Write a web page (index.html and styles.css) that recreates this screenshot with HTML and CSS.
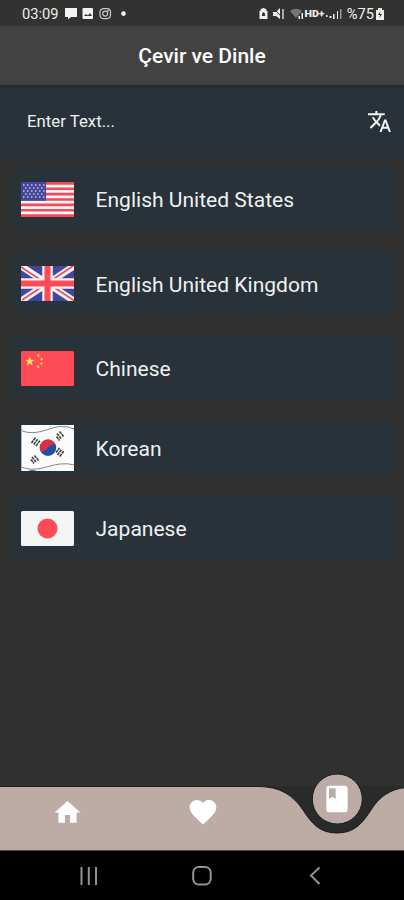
FILE: index.html
```html
<!DOCTYPE html>
<html lang="tr">
<head>
<meta charset="utf-8">
<title>Çevir ve Dinle</title>
<link rel="stylesheet" href="styles.css">
</head>
<body>
<div class="status">
  <span class="clock">03:09</span>
  <svg class="notices" width="66" height="14" viewBox="0 0 66 14" fill="#f2f2f2">
    <path d="M1 1h12v9H7l-3 2.600V10H1z"/>
    <rect x="18.500" y="1" width="10.500" height="11" rx="1"/><path d="M20 9l2-2 2 1.500 2-2.500 2 3z" fill="#333"/>
    <g fill="none" stroke="#c8c8c8" stroke-width="1.200"><rect x="36" y="1.600" width="10.500" height="10" rx="3.500"/><circle cx="41.200" cy="6.600" r="2.500"/></g><circle cx="44" cy="3.800" r=".8"/>
    <circle cx="59.500" cy="6.600" r="2.300"/>
  </svg>
  <svg class="signals" width="86" height="14" viewBox="0 0 86 14" fill="#eee">
    <path d="M1.500 4h1V2.500Q5.500-.5 8.500 2.500V4h1v8h-8z"/><path d="M4 9V6.500L5.500 5 7 6.500V9z" fill="#333"/>
    <path d="M15 5h3l4-4v11l-4-3h-3z"/><path d="M15.500 1l10 11" stroke="#333" stroke-width="1"/><path d="M25 2v10" stroke="#ccc" stroke-width="1.500"/>
    <path d="M32 4Q38-.5 44 4l-6 7z" fill="#777"/><path d="M40.500 9H42v3h-1.500zM43.500 6H45v6h-1.500z"/>
    <text x="46.500" y="9.500" class="hd" textLength="20" lengthAdjust="spacingAndGlyphs">HD+</text>
    <path d="M68 8h1.500v2H68zM71.500 9h2v2h-2zM75 7h1.500v5H75zM79 4h1v8h-1z"/><path d="M82 2h1.500v10H82z" fill="#999"/>
  </svg>
  <span class="percent">%75</span>
  <svg class="battery" width="10" height="12" viewBox="0 0 10 12"><path d="M3 0h4v2h2v10H1V2h2z" fill="#eee"/><path d="M5.500 3L3 7h2l-.5 3L7 6H5z" fill="#333"/></svg>
</div>
<header class="appbar">Çevir ve Dinle</header>
<div class="entry">
  <span>Enter Text...</span>
  <svg width="25" height="25" viewBox="0 0 24 24" fill="#f4f7f8"><path d="M12.870 15.070l-2.540-2.510.03-.03A17.520 17.520 0 0 0 14.070 6H17V4h-7V2H8v2H1v1.990h11.170C11.500 7.920 10.440 9.750 9 11.350 8.070 10.320 7.300 9.190 6.690 8h-2c.73 1.630 1.730 3.170 2.980 4.560l-5.090 5.020L4 19l5-5 3.110 3.110.76-2.040zM18.500 10h-2L12 22h2l1.120-3h4.750L21 22h2l-4.500-12zm-2.620 7l1.620-4.330L19.120 17h-3.240z"/></svg>
</div>
<main class="list">
  <div class="card">
    <svg class="flag" viewBox="0 0 53 35">
      <rect width="53" height="35" rx="1.500" fill="#f5f5f5"/>
      <path d="M0 1.350h53M0 6.730h53M0 12.120h53M0 17.500h53M0 22.880h53M0 28.270h53M0 33.650h53" stroke="#f04a5b" stroke-width="2.690"/>
      <path d="M0 0h25v18.800H0z" fill="#46479b"/>
      <path d="M2 3h22M4 6h20M2 9h22M4 12h20M2 15h22" stroke="#c5c5e5" stroke-width="1.300" stroke-dasharray="1.500 2.500"/>
    </svg>
    <span>English United States</span>
  </div>
  <div class="card">
    <svg class="flag" viewBox="0 0 53 35">
      <rect width="53" height="35" rx="1.500" fill="#41479b"/>
      <path d="M0 0l53 35M53 0L0 35" stroke="#f5f5f5" stroke-width="6.500"/>
      <path d="M0 1l22 14.500M31 20l22 14.500M52 0L31 14M22 20L1 34" stroke="#f04b5c" stroke-width="1.700"/>
      <path d="M26.500 0v35M0 17.500h53" stroke="#f5f5f5" stroke-width="10.500"/>
      <path d="M26.500 0v35M0 17.500h53" stroke="#ff4b55" stroke-width="6"/>
    </svg>
    <span>English United Kingdom</span>
  </div>
  <div class="card">
    <svg class="flag" viewBox="0 0 53 35">
      <rect width="53" height="35" rx="1.500" fill="#ff4b55"/>
      <g fill="#ffe15a"><path d="M8.800 5.500l1.200 3.300 3.500.1-2.800 2.100 1 3.400-2.900-2-2.900 2 1-3.400-2.800-2.100 3.500-.1z"/>
      <path d="M16.500 3l1 .8 1.200-.4-.5 1.200.8 1-1.300-.1-.7 1-.3-1.200-1.200-.4 1-.7zM20 6.500l.8.800 1.200-.3-.5 1.100.6 1-1.200-.1-.8.900-.2-1.200-1.100-.5 1-.6zM19.800 11l.8.800 1.200-.2-.6 1 .6 1.100-1.200-.3-.8.900-.1-1.200-1.100-.5 1.100-.5zM16.500 14l.8.800 1.200-.2-.6 1 .6 1.100-1.200-.3-.8.900-.1-1.200-1.100-.5 1.100-.5z"/></g>
    </svg>
    <span>Chinese</span>
  </div>
  <div class="card short">
    <svg class="flag tall" viewBox="0 0 53 46">
      <path d="M0 0h53v46H0z" fill="#fcfcfc"/>
      <path d="M0 5.500C15 12 29 2 39 1.500Q47 1 53 4M0 42C16 48 27 40 39 39Q47 38 53 40" fill="none" stroke="#777" stroke-width=".9"/>
      <path d="M.5 0v46" stroke="#999" stroke-width=".7"/><path d="M7 46q4-1.500 9 0z" fill="#222"/>
      <circle cx="27" cy="22.800" r="8.200" fill="#1b50a8"/>
      <path d="M19.400 26A8.200 8.200 0 1 1 34.800 20.500C32 18.500 29 20 27 22.800S22 27 19.400 26z" fill="#d92e45"/>
      <g stroke="#444" stroke-width="1.700" stroke-dasharray="3 .6"><path d="M10.500 18l4-5.500M12.800 19.500l4-5.500M15 21l4-5.500"/><path d="M36.500 30l4-5.500M38.800 31.500l4-5.500M35 27.500l3.500-4.500"/><path d="M11 32l4 5M13.500 30.500l4 5M10 34.500l3 4M36 8.500l4 5M38.500 6.500l4 5M35.500 11.500l3 4"/></g>
    </svg>
    <span>Korean</span>
  </div>
  <div class="card">
    <svg class="flag" viewBox="0 0 53 35"><rect width="53" height="35" rx="1.500" fill="#f5f5f5"/><circle cx="26.500" cy="17.500" r="10" fill="#ff4b55"/></svg>
    <span>Japanese</span>
  </div>
</main>
<nav class="tabs">
  <svg class="wave" width="404" height="81" viewBox="0 770 404 81">
    <path d="M0 786H404V851H0z" fill="#292b2a"/>
    <path d="M-2 786.500H258C280 786.500 293 795 303 810C312 824 320 833 337 833C354 833 362 824 371 810C379 797 390 789 406 787.500V852H-2z" fill="#bdaca5" stroke="#1c1c1b"/>
    <path d="M0 850.500H404" stroke="#4e4744"/>
    <circle cx="337.300" cy="799" r="25" fill="#bdaca5" stroke="#1d1d1c"/>
  </svg>
  <div class="icons">
    <svg class="home" width="31" height="31" viewBox="0 0 24 24"><path d="M10 20v-6h4v6h5v-8h3L12 3 2 12h3v8z"/></svg>
    <svg class="heart" width="32" height="32" viewBox="0 0 24 24"><path d="M12 21.350l-1.450-1.320C5.400 15.360 2 12.280 2 8.500 2 5.420 4.420 3 7.500 3c1.740 0 3.410.81 4.500 2.090C13.090 3.810 14.760 3 16.500 3 19.580 3 22 5.420 22 8.500c0 3.780-3.400 6.860-8.550 11.540L12 21.350z"/></svg>
    <svg class="book" width="32" height="32" viewBox="0 0 24 24"><path d="M18 2H6c-1.100 0-2 .9-2 2v16c0 1.100.9 2 2 2h12c1.100 0 2-.9 2-2V4c0-1.100-.9-2-2-2zM6 4h5v8l-2.500-1.500L6 12V4z"/></svg>
  </div>
</nav>
<footer class="system">
  <svg width="404" height="49" viewBox="0 851 404 49" fill="none" stroke="#929292" stroke-width="2">
    <path d="M81.500 867v18M88.800 867v18M96 867v18"/><rect x="193.200" y="867" width="17.500" height="17.500" rx="5.500"/><path d="M319.500 867.500l-8.500 8 8.500 8.500"/>
  </svg>
</footer>
</body>
</html>
```
FILE: styles.css
```css
* { box-sizing: border-box; }
body { margin: 0; width: 404px; height: 900px; display: flex; flex-direction: column; overflow: hidden; background: #303030; color: #eef1f2; font-family: Roboto, sans-serif; }
svg { display: block; flex: none; }
.status { height: 26px; background: #323232; display: flex; align-items: center; padding: 1px 19px 0 22px; font-size: 14.7px; color: #eee; }
.clock { width: 37px; }
.notices { margin-left: 5px; }
.signals { margin-left: auto; }
.hd { font: 900 8.5px Roboto, sans-serif; }
.percent { margin-left: 3px; }
.battery { margin-left: 1px; }
.appbar { height: 59px; background: #424242; display: flex; align-items: center; justify-content: center; padding-top: 1px; font-size: 21px; font-weight: 500; color: #fff; }
.entry { height: 73px; background: linear-gradient(#202b2e, #293238 5px); display: flex; align-items: center; justify-content: space-between; padding: 0 12px 0 27px; font-size: 16.8px; }
.entry span { padding-bottom: 2px; }
.list { flex: 1; display: flex; flex-direction: column; gap: 20.500px; padding: 9px 10px 0 13px; }
.card { height: 64px; background: #283238; display: flex; align-items: center; gap: 21.500px; padding: 0 8px; font-size: 21.050px; }
.card span { padding-top: 1px; }
.card.short { height: 55px; }
.flag { width: 53px; height: 35px; }
.flag.tall { height: 46px; }
.tabs { height: 81px; display: grid; }
.wave, .icons { grid-area: 1 / 1; }
.icons { display: grid; grid-template-columns: 135px 135px 134px; justify-items: center; fill: #fff; }
.home { margin-top: 27px; }
.heart { margin-top: 26px; }
.book { margin-top: 13px; }
.system { height: 49px; background: #000; }
```
